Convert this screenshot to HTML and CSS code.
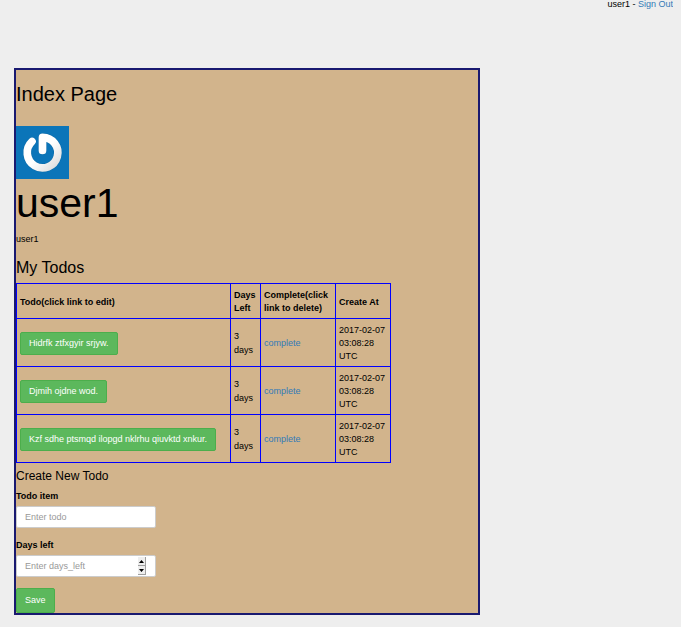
FILE: index.html
```html
<!DOCTYPE html>
<html lang="en">
<head>
<meta charset="utf-8">
<title>Todos</title>
<link rel="stylesheet" href="styles.css">
</head>
<body>
<header class="session">user1 - <a href="#">Sign Out</a></header>
<main class="panel">
  <h1 class="page-title">Index Page</h1>
  <svg class="avatar" viewBox="0 0 53 53" role="img" aria-label="user1 avatar">
    <defs>
      <linearGradient id="shine" x1="0" y1="0" x2="1" y2="1">
        <stop offset="0.5" stop-color="#ffffff"/>
        <stop offset="1" stop-color="#dcdcdc"/>
      </linearGradient>
    </defs>
    <rect width="53" height="53" fill="#0b75b9"/>
    <path d="M16 15.500A15.300 15.300 0 1 0 26.500 11.300V24.500" fill="none" stroke="#07578c" stroke-opacity=".4" stroke-width="8.500" stroke-linecap="round" stroke-linejoin="round"/>
    <path d="M16 15.500A15.300 15.300 0 1 0 26.500 11.300V24.500" fill="none" stroke="url(#shine)" stroke-width="7.700" stroke-linecap="round" stroke-linejoin="round"/>
  </svg>
  <h2 class="user-name">user1</h2>
  <p class="user-login">user1</p>
  <h3 class="section-title">My Todos</h3>
  <table class="todos">
    <colgroup><col class="col-todo"><col class="col-days"><col class="col-complete"><col class="col-created"></colgroup>
    <thead>
      <tr><th>Todo(click link to edit)</th><th>Days Left</th><th>Complete(click link to delete)</th><th>Create At</th></tr>
    </thead>
    <tbody>
      <tr><td><a class="btn" href="#">Hidrfk ztfxgyir srjyw.</a></td><td class="days">3 days</td><td><a href="#">complete</a></td><td>2017-02-07 03:08:28 UTC</td></tr>
      <tr><td><a class="btn" href="#">Djmih ojdne wod.</a></td><td class="days">3 days</td><td><a href="#">complete</a></td><td>2017-02-07 03:08:28 UTC</td></tr>
      <tr><td><a class="btn" href="#">Kzf sdhe ptsmqd ilopgd nklrhu qiuvktd xnkur.</a></td><td class="days">3 days</td><td><a href="#">complete</a></td><td>2017-02-07 03:08:28 UTC</td></tr>
    </tbody>
  </table>
  <form class="new-todo">
    <h4 class="form-title">Create New Todo</h4>
    <label for="todo">Todo item</label>
    <input class="field" id="todo" type="text" placeholder="Enter todo">
    <label for="days">Days left</label>
    <div class="number">
      <input class="field" id="days" type="number" placeholder="Enter days_left">
      <svg class="spinner" viewBox="0 0 8 18" aria-hidden="true">
        <path d="M0 0H8V9H0zM0 9H8V18H0z" fill="#eeeeee"/>
        <path d="M7 0H8V18H7zM0 8H8V9H0zM0 17H8V18H0z" fill="#a0a0a0"/>
        <path d="M1 6L3.500 3L6 6zM1 12L3.500 15L6 12z" fill="#000"/>
      </svg>
    </div>
    <button class="btn" type="submit">Save</button>
  </form>
</main>
</body>
</html>
```
FILE: styles.css
```css
* { box-sizing: border-box; }

body {
  margin: 0 8px 12px;
  background: #eeeeee;
  color: #000;
  font: 9px/13px "Liberation Sans", Arial, sans-serif;
}

a { color: #337ab7; text-decoration: none; }

h1, h2, h3, h4 { margin: 0; font-weight: 400; }

.session { text-align: right; line-height: 8px; }

.panel {
  width: 70%;
  margin: 60px 0 0 6px;
  border: 2px solid #191970;
  background: #d2b48c;
}

.page-title { padding: 13px 0 21px; font-size: 20px; line-height: 22px; }

.avatar { display: block; width: 53px; height: 53px; }

.user-name { font-size: 41px; line-height: 48px; }

.user-login { margin: 6px 0 11px; }

.section-title { margin-bottom: 5px; padding-top: 1px; font-size: 16px; line-height: 20px; }

.todos { border-collapse: collapse; table-layout: fixed; width: 374px; }

.col-todo { width: 214px; }
.col-days { width: 30px; }
.col-complete { width: 75px; }
.col-created { width: 55px; }

.todos th,
.todos td {
  height: 48px;
  padding: 2px 3px 0;
  border: 1px solid #0000ff;
  text-align: left;
  vertical-align: middle;
}

.todos th { height: 35px; }

.todos .days { padding-top: 0; line-height: 14px; }

.btn {
  display: inline-block;
  padding: 4px 8px;
  border: 1px solid #4cae4c;
  border-radius: 2px;
  background: #5cb85c;
  color: #fff;
  font: inherit;
  white-space: nowrap;
}

.new-todo .btn { display: block; padding: 5px 8px; }

.form-title { margin: 5px 0 6px; font-size: 12px; line-height: 16px; }

.new-todo label { display: block; margin-bottom: 3px; font-weight: 700; }

.field {
  display: block;
  width: 140px;
  height: 22px;
  margin: 0 0 11px;
  padding: 0 8px;
  border: 1px solid #cccccc;
  border-radius: 2px;
  background: #fff;
  color: #555;
  font: inherit;
  appearance: textfield;
}

.field::placeholder { color: #999; opacity: 1; }

.number { position: relative; width: 140px; }

.spinner { position: absolute; top: 2px; right: 10px; width: 8px; height: 18px; }
```
